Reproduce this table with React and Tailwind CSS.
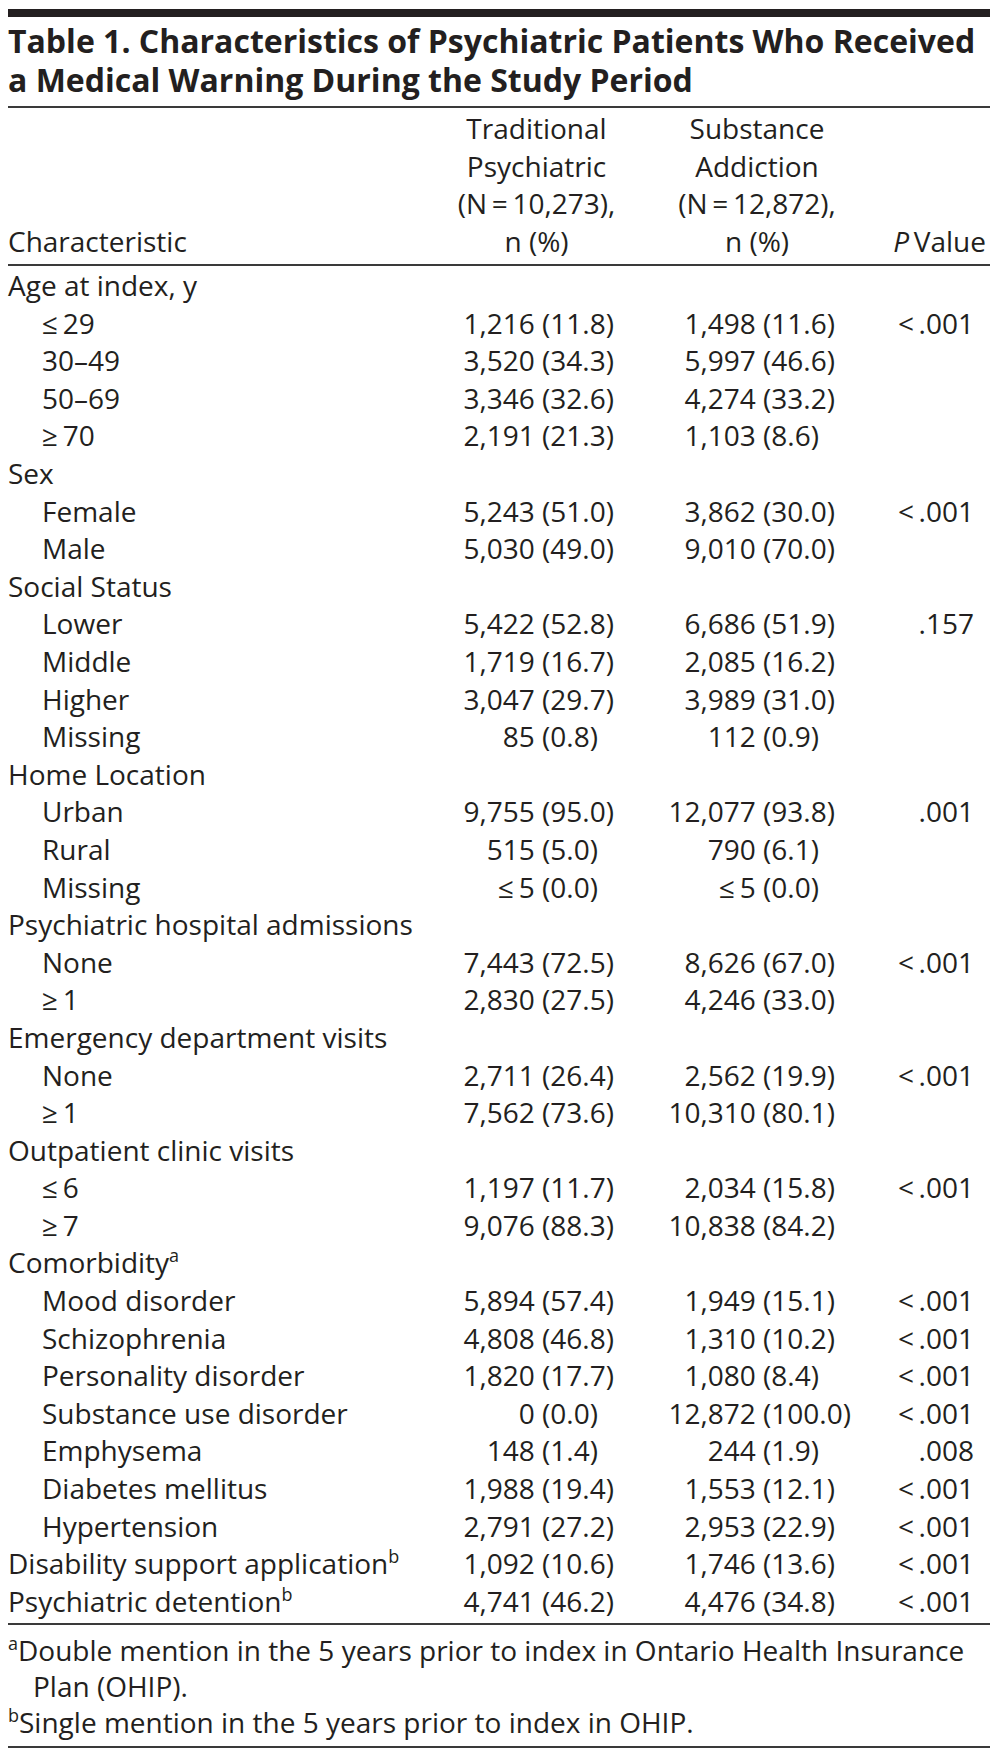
import React from "react";

const rows = [
  { label: "Age at index, y", group: true },
  { label: "≤\u200929", a: ["1,216", "11.8"], b: ["1,498", "11.6"], p: "<\u2009.001" },
  { label: "30–49", a: ["3,520", "34.3"], b: ["5,997", "46.6"] },
  { label: "50–69", a: ["3,346", "32.6"], b: ["4,274", "33.2"] },
  { label: "≥\u200970", a: ["2,191", "21.3"], b: ["1,103", "8.6"] },
  { label: "Sex", group: true },
  { label: "Female", a: ["5,243", "51.0"], b: ["3,862", "30.0"], p: "<\u2009.001" },
  { label: "Male", a: ["5,030", "49.0"], b: ["9,010", "70.0"] },
  { label: "Social Status", group: true },
  { label: "Lower", a: ["5,422", "52.8"], b: ["6,686", "51.9"], p: ".157" },
  { label: "Middle", a: ["1,719", "16.7"], b: ["2,085", "16.2"] },
  { label: "Higher", a: ["3,047", "29.7"], b: ["3,989", "31.0"] },
  { label: "Missing", a: ["85", "0.8"], b: ["112", "0.9"] },
  { label: "Home Location", group: true },
  { label: "Urban", a: ["9,755", "95.0"], b: ["12,077", "93.8"], p: ".001" },
  { label: "Rural", a: ["515", "5.0"], b: ["790", "6.1"] },
  { label: "Missing", a: ["≤\u20095", "0.0"], b: ["≤\u20095", "0.0"] },
  { label: "Psychiatric hospital admissions", group: true },
  { label: "None", a: ["7,443", "72.5"], b: ["8,626", "67.0"], p: "<\u2009.001" },
  { label: "≥\u20091", a: ["2,830", "27.5"], b: ["4,246", "33.0"] },
  { label: "Emergency department visits", group: true },
  { label: "None", a: ["2,711", "26.4"], b: ["2,562", "19.9"], p: "<\u2009.001" },
  { label: "≥\u20091", a: ["7,562", "73.6"], b: ["10,310", "80.1"] },
  { label: "Outpatient clinic visits", group: true },
  { label: "≤\u20096", a: ["1,197", "11.7"], b: ["2,034", "15.8"], p: "<\u2009.001" },
  { label: "≥\u20097", a: ["9,076", "88.3"], b: ["10,838", "84.2"] },
  { label: "Comorbidity", sup: "a", group: true },
  { label: "Mood disorder", a: ["5,894", "57.4"], b: ["1,949", "15.1"], p: "<\u2009.001" },
  { label: "Schizophrenia", a: ["4,808", "46.8"], b: ["1,310", "10.2"], p: "<\u2009.001" },
  { label: "Personality disorder", a: ["1,820", "17.7"], b: ["1,080", "8.4"], p: "<\u2009.001" },
  { label: "Substance use disorder", a: ["0", "0.0"], b: ["12,872", "100.0"], p: "<\u2009.001" },
  { label: "Emphysema", a: ["148", "1.4"], b: ["244", "1.9"], p: ".008" },
  { label: "Diabetes mellitus", a: ["1,988", "19.4"], b: ["1,553", "12.1"], p: "<\u2009.001" },
  { label: "Hypertension", a: ["2,791", "27.2"], b: ["2,953", "22.9"], p: "<\u2009.001" },
  { label: "Disability support application", sup: "b", top: true, a: ["1,092", "10.6"], b: ["1,746", "13.6"], p: "<\u2009.001" },
  { label: "Psychiatric detention", sup: "b", top: true, a: ["4,741", "46.2"], b: ["4,476", "34.8"], p: "<\u2009.001" },
];

function Sup({ children }) {
  return <span className="relative top-[-11px] text-[18px] leading-none">{children}</span>;
}

function Val({ v, w }) {
  if (!v) return <div />;
  return (
    <div className="flex">
      <span className={`${w} text-right whitespace-pre`}>{v[0] + " "}</span>
      <span className="whitespace-pre">({v[1]})</span>
    </div>
  );
}

export default function App() {
  return (
    <div
      className="w-[1000px] bg-white text-[#231f20] pl-[8px] pt-[9px]"
      style={{ fontFamily: "'Open Sans', 'Liberation Sans', sans-serif" }}
    >
      <div className="w-[982px]">
        <div className="h-[8px] bg-[#231f20]" />
        <div className="pt-[4px] pb-[7px] text-[32px] font-bold leading-[39px] whitespace-nowrap">
          <div>Table 1. Characteristics of Psychiatric Patients Who Received</div>
          <div>a Medical Warning During the Study Period</div>
        </div>
        <div className="h-[2px] bg-[#3a3a3a]" />

        <div className="text-[28px] leading-[37.5px]">
          <div className="grid grid-cols-[441px_175px_233px_133px] pt-[2px] pb-[4px]">
            <div className="flex items-end">Characteristic</div>
            <div className="text-center flex flex-col items-center">
              <span>Traditional</span>
              <span>Psychiatric</span>
              <span>(N{"\u2009=\u2009"}10,273),</span>
              <span>n (%)</span>
            </div>
            <div className="pl-[33px] text-center flex flex-col items-center">
              <span>Substance</span>
              <span>Addiction</span>
              <span>(N{"\u2009=\u2009"}12,872),</span>
              <span>n (%)</span>
            </div>
            <div className="flex items-end justify-end pr-[4px]">
              <span>
                <span className="italic">P</span>
                {"\u2009"}Value
              </span>
            </div>
          </div>
          <div className="h-[2px] bg-[#3a3a3a]" />

          <div className="pt-[1px] pb-[3px]">
            {rows.map((r, i) => (
              <div key={i} className="grid grid-cols-[441px_175px_233px_133px] h-[37.6px] items-center">
                <div className={`whitespace-nowrap ${r.group || r.top ? "" : "pl-[34px]"}`}>
                  {r.label}
                  {r.sup && <Sup>{r.sup}</Sup>}
                </div>
                <Val v={r.a} w="w-[93px]" />
                <div className="pl-[33px]">
                  <Val v={r.b} w="w-[106px]" />
                </div>
                <div className="text-right pr-[16px]">{r.p || ""}</div>
              </div>
            ))}
          </div>
          <div className="h-[2px] bg-[#3a3a3a]" />

          <div className="pt-[7px] pb-[6px] leading-[36px] whitespace-nowrap">
            <div>
              <Sup>a</Sup>Double mention in the 5 years prior to index in Ontario Health Insurance
            </div>
            <div className="pl-[25px]">Plan (OHIP).</div>
            <div>
              <Sup>b</Sup>Single mention in the 5 years prior to index in OHIP.
            </div>
          </div>
          <div className="h-[2px] bg-[#3a3a3a]" />
        </div>
      </div>
    </div>
  );
}
